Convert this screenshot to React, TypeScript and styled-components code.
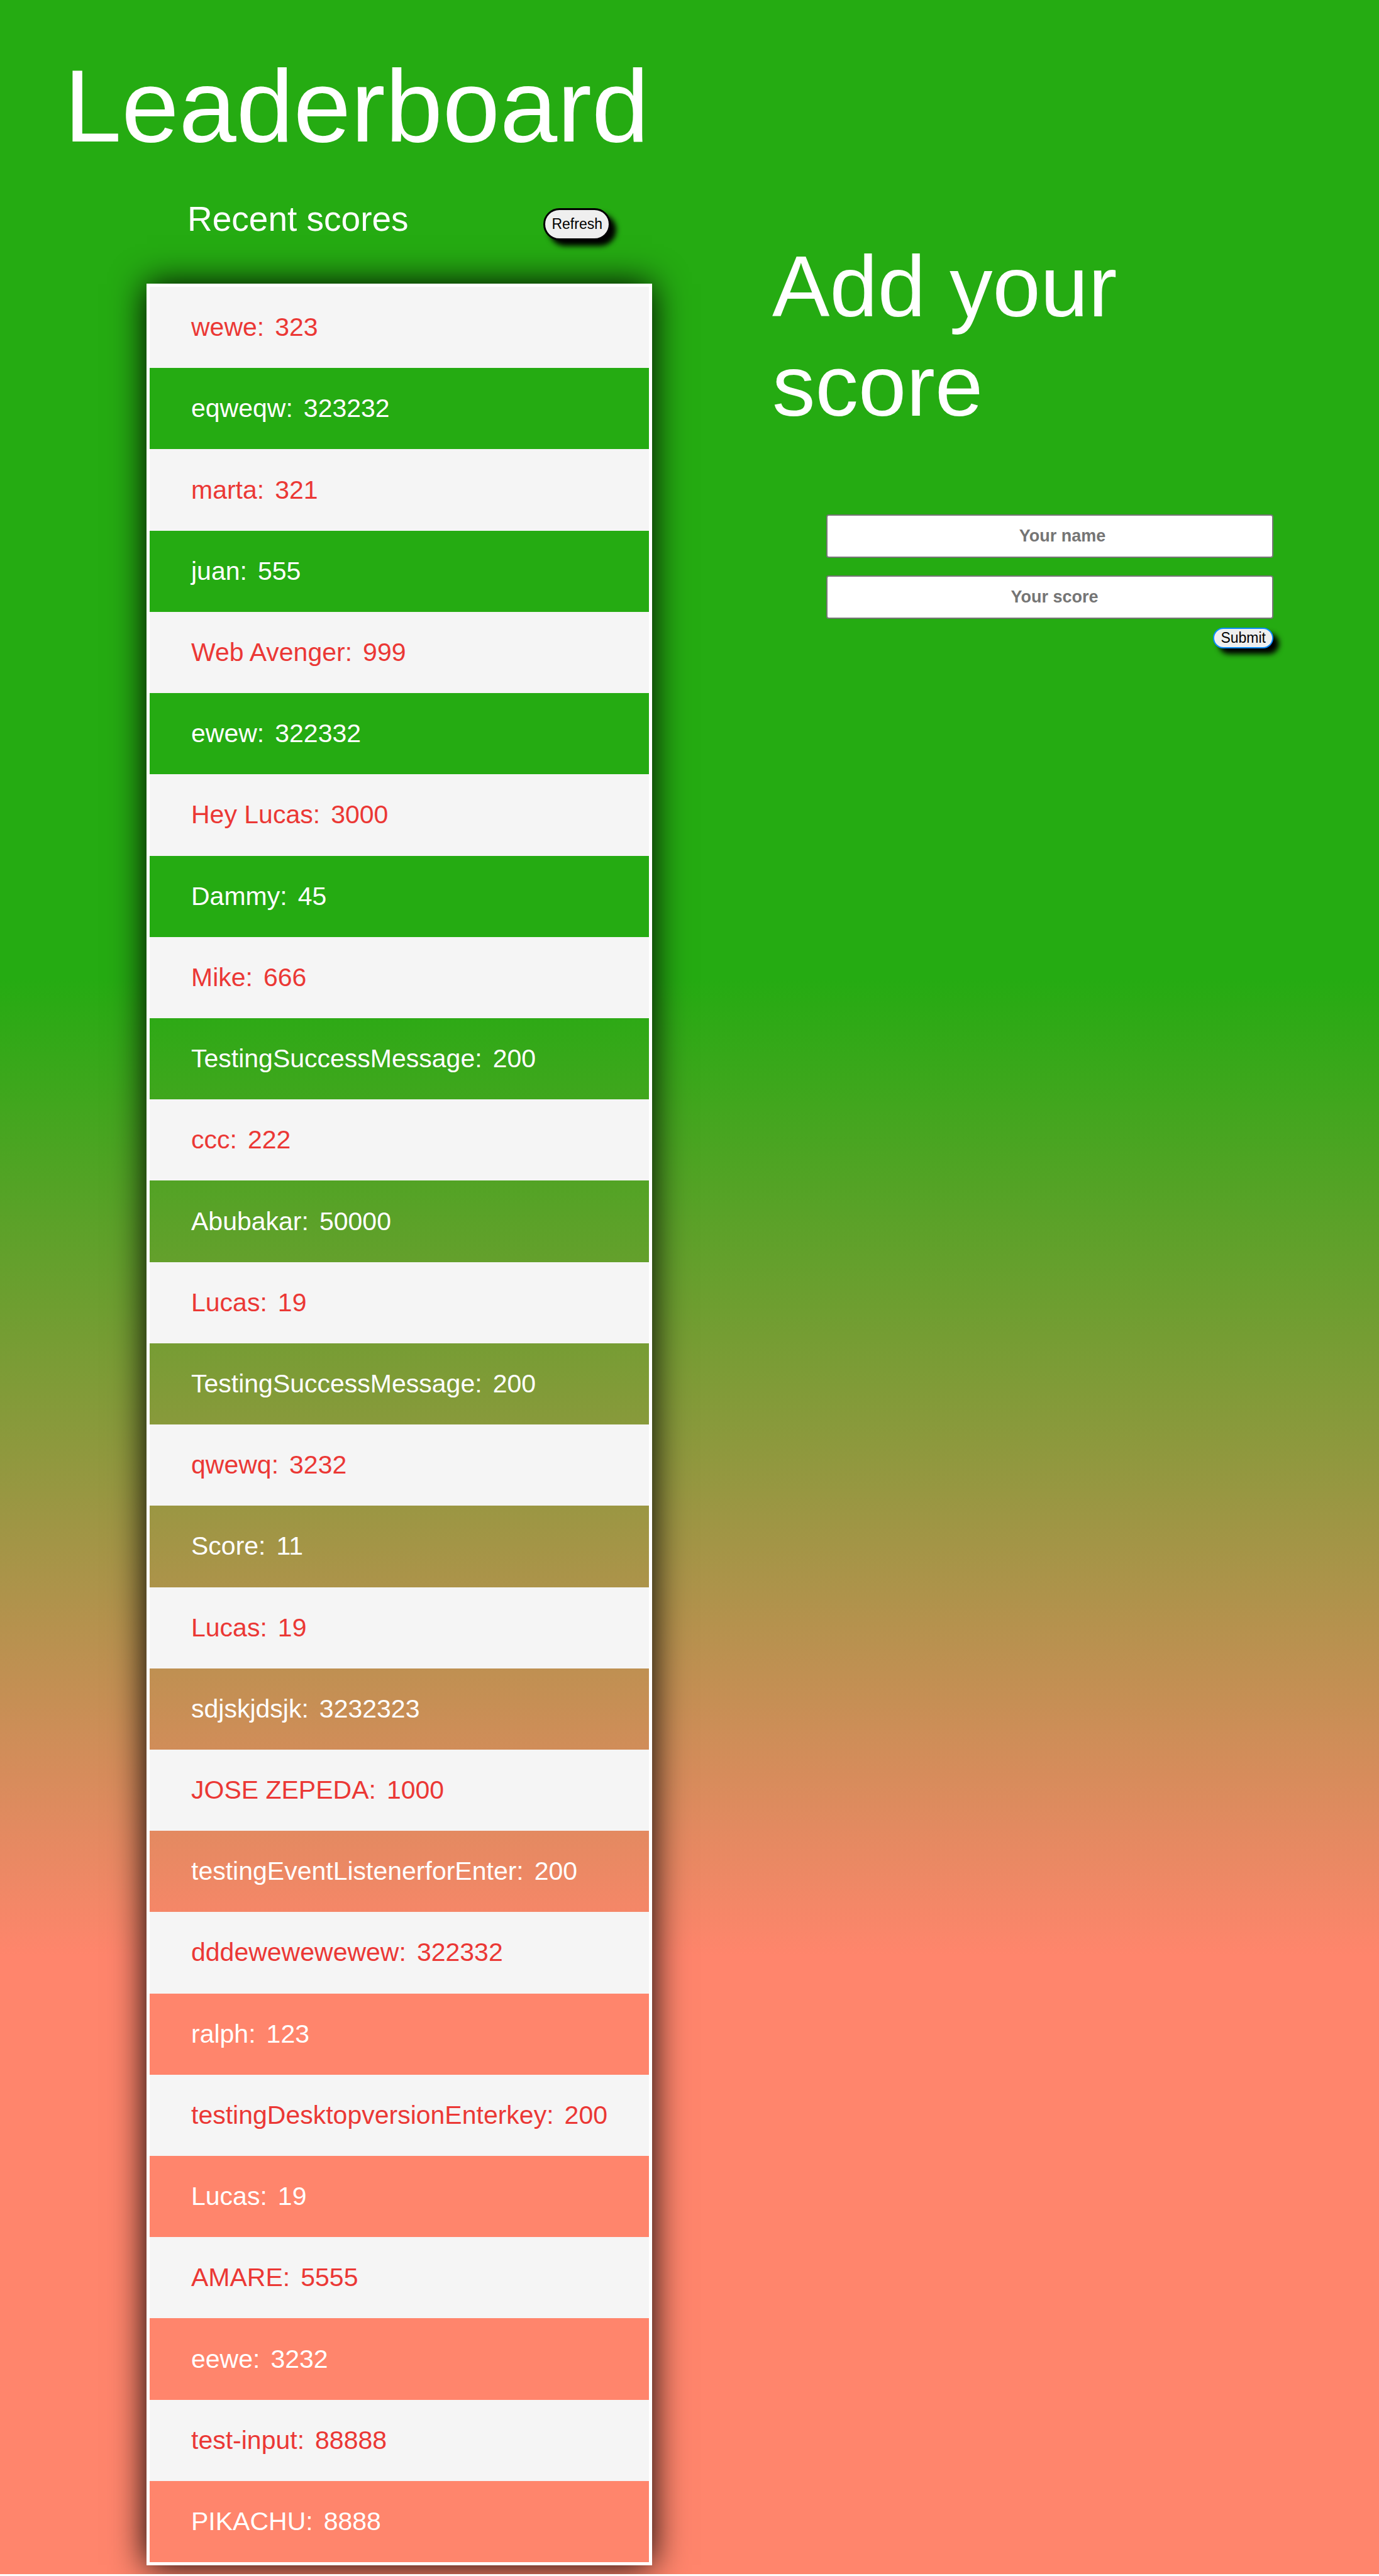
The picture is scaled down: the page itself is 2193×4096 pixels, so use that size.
import React, { useState } from 'react';
import styled, { createGlobalStyle, css } from 'styled-components';

const GlobalStyle = createGlobalStyle`
  *, *::before, *::after {
    box-sizing: border-box;
  }
  body {
    margin: 0;
    background: #fff;
    font-family: "Liberation Sans", Arial, Helvetica, sans-serif;
  }
`;

const Page = styled.main`
  display: grid;
  grid-template-columns: 56% 44%;
  min-height: calc(100vh - 3px);
  overflow: hidden;
  color: #fff;
  background: linear-gradient(to bottom, #25ab12 38%, #ff856c 76%);
`;

const BoardColumn = styled.div`
  display: flex;
  flex-direction: column;
  align-items: flex-start;
  padding: 75px 0 14px 102px;
`;

const Title = styled.h1`
  margin: 0;
  font-size: 164px;
  font-weight: 400;
  line-height: 188px;
`;

const Scores = styled.section`
  flex: 1;
  display: flex;
  flex-direction: column;
  margin: 54px 0 0 131px;
`;

const ScoresHeader = styled.header`
  display: flex;
  justify-content: space-between;
  align-items: flex-end;
  padding: 0 66px 0 65px;
  margin-bottom: 69px;
`;

const Subtitle = styled.h2`
  margin: 0;
  padding-bottom: 3px;
  font-size: 55px;
  font-weight: 400;
  line-height: 62px;
`;

const buttonBase = css`
  color: #000;
  background: #efefef;
  font-family: inherit;
  font-size: 23px;
  line-height: 25px;
  border-radius: 26px;
  box-shadow: 9px 9px 9px #000;
  cursor: pointer;
`;

const RefreshButton = styled.button`
  ${buttonBase}
  padding: 10px;
  border: 3px solid #000;
`;

const SubmitButton = styled.button`
  ${buttonBase}
  align-self: flex-end;
  padding: 2px 10px;
  border: 2px solid #0a8cff;
`;

const ScoreList = styled.ul`
  flex: 1;
  display: flex;
  flex-direction: column;
  margin: 0;
  padding: 0;
  list-style: none;
  border: 5px solid #fff;
  box-shadow: 0 0 52px #000;
`;

const ScoreRow = styled.li`
  flex: 1 0 auto;
  display: flex;
  align-items: center;
  gap: 17px;
  padding: 41px 66px;
  font-size: 41px;
  line-height: 47px;
  white-space: nowrap;

  &:nth-child(odd) {
    color: #eb3835;
    background: #f5f5f5;
  }
`;

const FormColumn = styled.section`
  padding: 377px 168px 0 0;
`;

const FormTitle = styled.h2`
  margin: 0 0 125px;
  font-size: 137px;
  font-weight: 400;
  line-height: 158px;
`;

const ScoreForm = styled.form`
  display: flex;
  flex-direction: column;
  margin-left: 86px;
`;

const Field = styled.input<{ $indent: number }>`
  width: 100%;
  height: 69px;
  margin: 0 0 28px;
  padding: 0 0 0 ${({ $indent }) => $indent}px;
  border: 2px solid #767676;
  border-radius: 4px;
  background: #fff;
  color: #000;
  font-family: inherit;
  font-size: 27px;
  font-weight: 700;
  text-align: center;

  &::placeholder {
    color: #757575;
    opacity: 1;
  }

  & + button {
    margin-top: -14px;
  }
`;

type Entry = { user: string; score: string };

const initialEntries: Entry[] = [
  { user: 'wewe', score: '323' },
  { user: 'eqweqw', score: '323232' },
  { user: 'marta', score: '321' },
  { user: 'juan', score: '555' },
  { user: 'Web Avenger', score: '999' },
  { user: 'ewew', score: '322332' },
  { user: 'Hey Lucas', score: '3000' },
  { user: 'Dammy', score: '45' },
  { user: 'Mike', score: '666' },
  { user: 'TestingSuccessMessage', score: '200' },
  { user: 'ccc', score: '222' },
  { user: 'Abubakar', score: '50000' },
  { user: 'Lucas', score: '19' },
  { user: 'TestingSuccessMessage', score: '200' },
  { user: 'qwewq', score: '3232' },
  { user: 'Score', score: '11' },
  { user: 'Lucas', score: '19' },
  { user: 'sdjskjdsjk', score: '3232323' },
  { user: 'JOSE ZEPEDA', score: '1000' },
  { user: 'testingEventListenerforEnter', score: '200' },
  { user: 'dddewewewewew', score: '322332' },
  { user: 'ralph', score: '123' },
  { user: 'testingDesktopversionEnterkey', score: '200' },
  { user: 'Lucas', score: '19' },
  { user: 'AMARE', score: '5555' },
  { user: 'eewe', score: '3232' },
  { user: 'test-input', score: '88888' },
  { user: 'PIKACHU', score: '8888' },
];

export default function App() {
  const [entries, setEntries] = useState(initialEntries);
  const [user, setUser] = useState('');
  const [score, setScore] = useState('');

  const handleSubmit = (event: React.FormEvent) => {
    event.preventDefault();
    if (!user || !score) return;
    setEntries([...entries, { user, score }]);
    setUser('');
    setScore('');
  };

  return (
    <>
      <GlobalStyle />
      <Page>
        <BoardColumn>
          <Title>Leaderboard</Title>
          <Scores>
            <ScoresHeader>
              <Subtitle>Recent scores</Subtitle>
              <RefreshButton type="button" onClick={() => setEntries(initialEntries)}>
                Refresh
              </RefreshButton>
            </ScoresHeader>
            <ScoreList>
              {entries.map((entry, index) => (
                <ScoreRow key={index}>
                  <span>{entry.user}:</span>
                  <span>{entry.score}</span>
                </ScoreRow>
              ))}
            </ScoreList>
          </Scores>
        </BoardColumn>
        <FormColumn>
          <FormTitle>Add your score</FormTitle>
          <ScoreForm onSubmit={handleSubmit}>
            <Field
              $indent={40}
              type="text"
              aria-label="Your name"
              placeholder="Your name"
              value={user}
              onChange={(event) => setUser(event.target.value)}
            />
            <Field
              $indent={15}
              type="text"
              inputMode="numeric"
              aria-label="Your score"
              placeholder="Your score"
              value={score}
              onChange={(event) => setScore(event.target.value)}
            />
            <SubmitButton type="submit">Submit</SubmitButton>
          </ScoreForm>
        </FormColumn>
      </Page>
    </>
  );
}
